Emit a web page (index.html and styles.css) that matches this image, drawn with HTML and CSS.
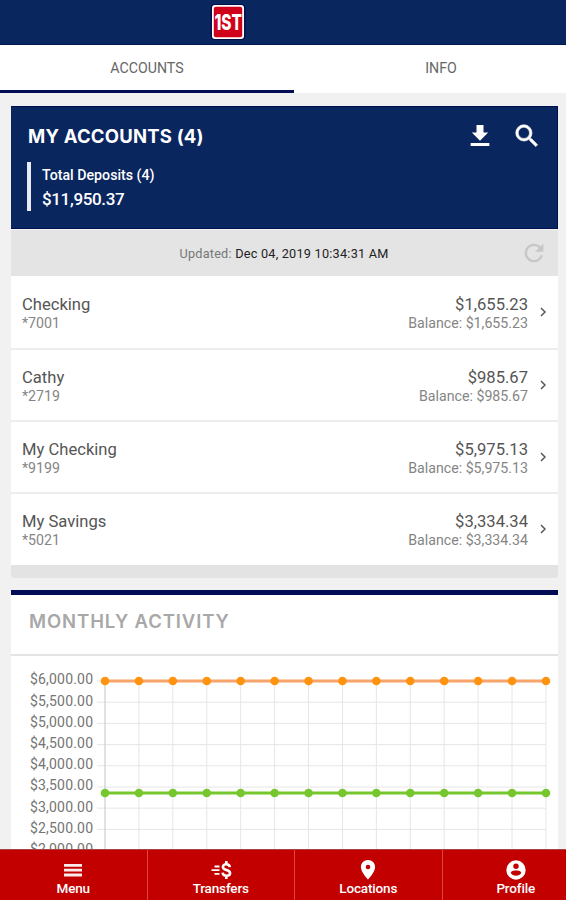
FILE: index.html
```
<!DOCTYPE html>
<html lang="en">
<head>
  <meta charset="UTF-8">
  <title>My Accounts</title>
  <link rel="stylesheet" href="styles.css">
</head>
<body>
  <div class="app">
    <header class="topbar">
      <svg class="logo" width="36" height="38" viewBox="0 0 36 38">
        <rect x="0.5" y="1" width="35" height="36" rx="4" fill="#00104f"/>
        <rect x="2" y="2" width="32" height="34" rx="3" fill="#fff"/>
        <rect x="3.800" y="3.800" width="28.400" height="30.400" rx="2" fill="#d0021b"/>
        <text class="logo-text" x="4.500" y="27" textLength="27.500" lengthAdjust="spacingAndGlyphs">1ST</text>
      </svg>
    </header>

    <nav class="tabs">
      <a class="tab active">ACCOUNTS</a>
      <a class="tab">INFO</a>
    </nav>

    <main class="content">
      <section class="accounts">
        <div class="accounts-header">
          <div class="title-row">
            <h1>MY ACCOUNTS (4)</h1>
            <svg class="icon-download" width="28" height="28" viewBox="0 0 24 24"><path fill="#fff" d="M19 9h-4V2.500H9V9H5l7 7 7-7zM4 18v2.500h16V18H4z"/></svg>
            <svg class="icon-search" width="30" height="30" viewBox="0 0 24 24"><path fill="#fff" stroke="#fff" stroke-width=".5" d="M15.500 14h-.79l-.28-.27A6.471 6.471 0 0 0 16 9.500 6.500 6.500 0 1 0 9.500 16c1.610 0 3.090-.59 4.230-1.570l.27.28v.79l5 4.990L20.490 19l-4.990-5zm-6 0C7.010 14 5 11.990 5 9.500S7.010 5 9.500 5 14 7.010 14 9.500 11.990 14 9.500 14z"/></svg>
          </div>
          <div class="deposits">
            <div class="deposits-label">Total Deposits (4)</div>
            <div class="deposits-total">$11,950.37</div>
          </div>
        </div>

        <div class="updated">
          <span class="updated-text">Updated: <b>Dec 04, 2019 10:34:31 AM</b></span>
          <svg class="icon-refresh" width="28" height="28" viewBox="0 0 24 24"><path fill="#c6c6c6" d="M17.650 6.350A7.958 7.958 0 0 0 12 4a8 8 0 1 0 7.730 10h-2.080A5.990 5.990 0 0 1 12 18a6 6 0 1 1 0-12c1.660 0 3.140.69 4.220 1.780L13 11h7V4l-2.350 2.350z"/></svg>
        </div>

        <ul class="account-list">
          <li class="account">
            <div class="account-name">
              <div class="main-text">Checking</div>
              <div class="sub-text">*7001</div>
            </div>
            <div class="account-amount">
              <div class="main-text">$1,655.23</div>
              <div class="sub-text">Balance: $1,655.23</div>
            </div>
            <svg class="chevron" width="6" height="10" viewBox="0 0 6 10"><path d="M1 1l4 4-4 4"/></svg>
          </li>
          <li class="account">
            <div class="account-name">
              <div class="main-text">Cathy</div>
              <div class="sub-text">*2719</div>
            </div>
            <div class="account-amount">
              <div class="main-text">$985.67</div>
              <div class="sub-text">Balance: $985.67</div>
            </div>
            <svg class="chevron" width="6" height="10" viewBox="0 0 6 10"><path d="M1 1l4 4-4 4"/></svg>
          </li>
          <li class="account">
            <div class="account-name">
              <div class="main-text">My Checking</div>
              <div class="sub-text">*9199</div>
            </div>
            <div class="account-amount">
              <div class="main-text">$5,975.13</div>
              <div class="sub-text">Balance: $5,975.13</div>
            </div>
            <svg class="chevron" width="6" height="10" viewBox="0 0 6 10"><path d="M1 1l4 4-4 4"/></svg>
          </li>
          <li class="account">
            <div class="account-name">
              <div class="main-text">My Savings</div>
              <div class="sub-text">*5021</div>
            </div>
            <div class="account-amount">
              <div class="main-text">$3,334.34</div>
              <div class="sub-text">Balance: $3,334.34</div>
            </div>
            <svg class="chevron" width="6" height="10" viewBox="0 0 6 10"><path d="M1 1l4 4-4 4"/></svg>
          </li>
        </ul>
        <div class="accounts-footer"></div>
      </section>

      <section class="activity">
        <h2>MONTHLY ACTIVITY</h2>
        <svg id="chart" class="chart" width="547" height="210" viewBox="0 0 547 210"></svg>
      </section>
    </main>

    <nav class="bottom-nav">
      <a class="nav-item">
        <svg width="24" height="22" viewBox="0 0 24 22"><path fill="#fff" fill-opacity=".92" d="M3 5h18v2.800H3zM3 9.800h18v2.800H3zM3 14.600h18v2.800H3z"/></svg>
        <span>Menu</span>
      </a>
      <a class="nav-item">
        <svg width="24" height="22" viewBox="0 0 24 22">
          <path fill="#fff" d="M5.500 6.500h5v1.900h-5zM2.500 10.200h8v1.900h-8zM5.500 13.900h5v1.900h-5z"/>
          <path fill="none" stroke="#fff" stroke-width="2.600" d="M20.800 8.200C20.600 6.300 19.400 5.300 17.300 5.300c-2 0-3.400 1-3.400 2.600 0 3.700 7.200 2.300 7.200 6.100 0 1.800-1.500 2.800-3.600 2.800-2.400 0-3.700-1.200-3.900-3.100M17.300 2v3.300M17.300 16.800V20"/>
        </svg>
        <span>Transfers</span>
      </a>
      <a class="nav-item">
        <svg width="24" height="22" viewBox="0 0 24 22"><path fill="#fff" d="M12 1C8 1 4.900 4.100 4.900 8c0 5.200 7.100 12.500 7.100 12.500S19.100 13.200 19.100 8C19.100 4.100 16 1 12 1zm0 9.300a2.300 2.300 0 1 1 0-4.600 2.300 2.300 0 0 1 0 4.600z"/></svg>
        <span>Locations</span>
      </a>
      <a class="nav-item">
        <svg width="24" height="22" viewBox="0 0 24 22"><circle cx="12" cy="11" r="9.700" fill="#fff"/><circle cx="12" cy="7.200" r="2.700" fill="#c20000"/><path fill="#c20000" d="M6.800 14c0-1.800 3.200-2.400 5.200-2.400s5.200.6 5.200 2.400c-1 1.700-3 2.700-5.200 2.700S7.800 15.700 6.800 14z"/></svg>
        <span>Profile</span>
      </a>
    </nav>
  </div>

  <script>
    var chart = document.getElementById("chart");
    var left = 94, step = 33.92, points = 14;
    var top0 = 25, rowHeight = 21.2;
    var svg = "";

    // horizontal grid lines and axis labels
    for (var i = 0; i < 9; i++) {
      var y = top0 + i * rowHeight;
      var amount = (6000 - i * 500).toLocaleString("en-US") + ".00";
      svg += '<line class="grid" x1="86" x2="535" y1="' + y + '" y2="' + y + '"/>';
      svg += '<text class="axis" x="19" y="' + (y + 3.3) + '" textLength="63">$' + amount + '</text>';
    }
    // vertical grid lines
    for (var j = 0; j < points; j++) {
      var x = left + j * step;
      svg += '<line class="' + (j ? "grid" : "grid first") + '" x1="' + x + '" x2="' + x + '" y1="' + top0 + '" y2="210"/>';
    }

    function drawSeries(y, name) {
      svg += '<line class="line ' + name + '" x1="' + left + '" x2="' + (left + step * 13) + '" y1="' + y + '" y2="' + y + '"/>';
      for (var k = 0; k < points; k++) {
        svg += '<circle class="dot ' + name + '" r="4.300" cx="' + (left + k * step) + '" cy="' + y + '"/>';
      }
    }
    drawSeries(25, "orange");
    drawSeries(137, "green");
    chart.innerHTML = svg;
  </script>
</body>
</html>
```

FILE: styles.css
```
* {
  box-sizing: border-box;
}
body {
  margin: 0;
  background: #f1f1f1;
  font-family: Roboto, sans-serif;
  color: #4a4a4a;
  overflow: hidden;
}
.app {
  display: flex;
  flex-direction: column;
  width: 590px;
  height: 900px;
}
.topbar {
  flex: none;
  height: 45px;
  padding: 3px 0 0 210px;
  background: #0a265f;
  border-bottom: 1px solid #001650;
}
.logo {
  display: block;
}
.logo-text {
  font: 800 22px Inter, sans-serif;
  fill: #fff;
}
.tabs {
  flex: none;
  display: flex;
  height: 48px;
  background: #fff;
}
.tab {
  width: 294px;
  padding-top: 14px;
  font-size: 14.200px;
  line-height: 18px;
  text-align: center;
  color: #666;
}
.tab.active {
  border-bottom: 3px solid #030d55;
}
.content {
  flex: 1;
  min-height: 0;
  width: 566px;
  padding: 13px 8px 0 11px;
  overflow: hidden;
}
.accounts-header {
  height: 123px;
  padding: 14px 15px 0 17px;
  background: #0a265f;
  border: 1px solid #00104f;
  border-width: 1px 1px 1px 0;
  color: #fff;
}
.title-row {
  display: flex;
  align-items: center;
  height: 30px;
}
h1 {
  flex: 1;
  margin: 0;
  font: 700 18.500px Inter, sans-serif;
  letter-spacing: 0.2px;
}
.icon-search {
  margin-left: 18px;
}
.deposits {
  height: 49px;
  margin: 11px 0 0 -1px;
  padding-left: 11px;
  border-left: 4px solid #e9ebf5;
}
.deposits-label {
  padding-top: 4px;
  font-size: 14.200px;
  line-height: 18px;
  font-weight: 500;
}
.deposits-total {
  padding-top: 5px;
  font-size: 17px;
  line-height: 20px;
  font-weight: 500;
  letter-spacing: -0.35px;
}
.updated {
  display: flex;
  align-items: center;
  height: 47px;
  padding-right: 10px;
  background: #e4e4e4;
  border-top: 1px solid #f4f4f4;
}
.updated-text {
  flex: 1;
  padding-left: 37px;
  font-size: 12.700px;
  letter-spacing: 0.23px;
  text-align: center;
  color: #777;
}
.updated-text b {
  font-weight: 400;
  color: #222;
}
.account-list {
  margin: 0;
  padding: 0;
  list-style: none;
}
.account {
  display: flex;
  height: 72px;
  padding: 17px 12px 0 11px;
  background: #fff;
  border-bottom: 2px solid #ededed;
}
.account:first-child {
  height: 74px;
  padding-top: 18px;
}
.account:last-child {
  height: 71px;
  border-bottom: 0;
}
.account-name {
  flex: 1;
}
.account-amount {
  text-align: right;
}
.main-text {
  font-size: 16.600px;
  line-height: 21px;
  color: #555;
}
.sub-text {
  font-size: 14.200px;
  line-height: 16px;
  color: #858585;
}
.chevron {
  margin: 13px 0 0 12px;
  fill: none;
  stroke: #555;
  stroke-width: 1.500;
}
.accounts-footer {
  height: 13px;
  background: #e3e3e3;
  border-radius: 0 0 4px 4px;
}
.activity {
  margin-top: 12px;
  background: #fff;
  border-top: 5px solid #030d55;
}
h2 {
  height: 61px;
  margin: 0;
  padding: 15px 18px 0;
  font: 600 18.500px/23px Inter, sans-serif;
  letter-spacing: 0.9px;
  color: #a8a8a8;
  border-bottom: 2px solid #e4e4e4;
}
.chart {
  display: block;
}
.grid {
  stroke: #e6e6e6;
}
.grid.first {
  stroke: #c4c4c4;
}
.axis {
  font-size: 14px;
  fill: #757575;
}
.line.orange {
  stroke: #f8a46a;
  stroke-width: 3;
}
.line.green {
  stroke: #76c72e;
  stroke-width: 3;
}
.dot.orange {
  fill: #ff930f;
}
.dot.green {
  fill: #76c72e;
}
.bottom-nav {
  flex: none;
  display: flex;
  height: 51px;
  background: #c20000;
  border-top: 1px solid #a94444;
}
.nav-item {
  display: flex;
  flex-direction: column;
  align-items: center;
  width: 147.700px;
  padding-top: 9px;
  border-right: 1px solid #d44;
  font-size: 13.500px;
  line-height: 15px;
  font-weight: 500;
  letter-spacing: -0.15px;
  color: #fff;
}
```
